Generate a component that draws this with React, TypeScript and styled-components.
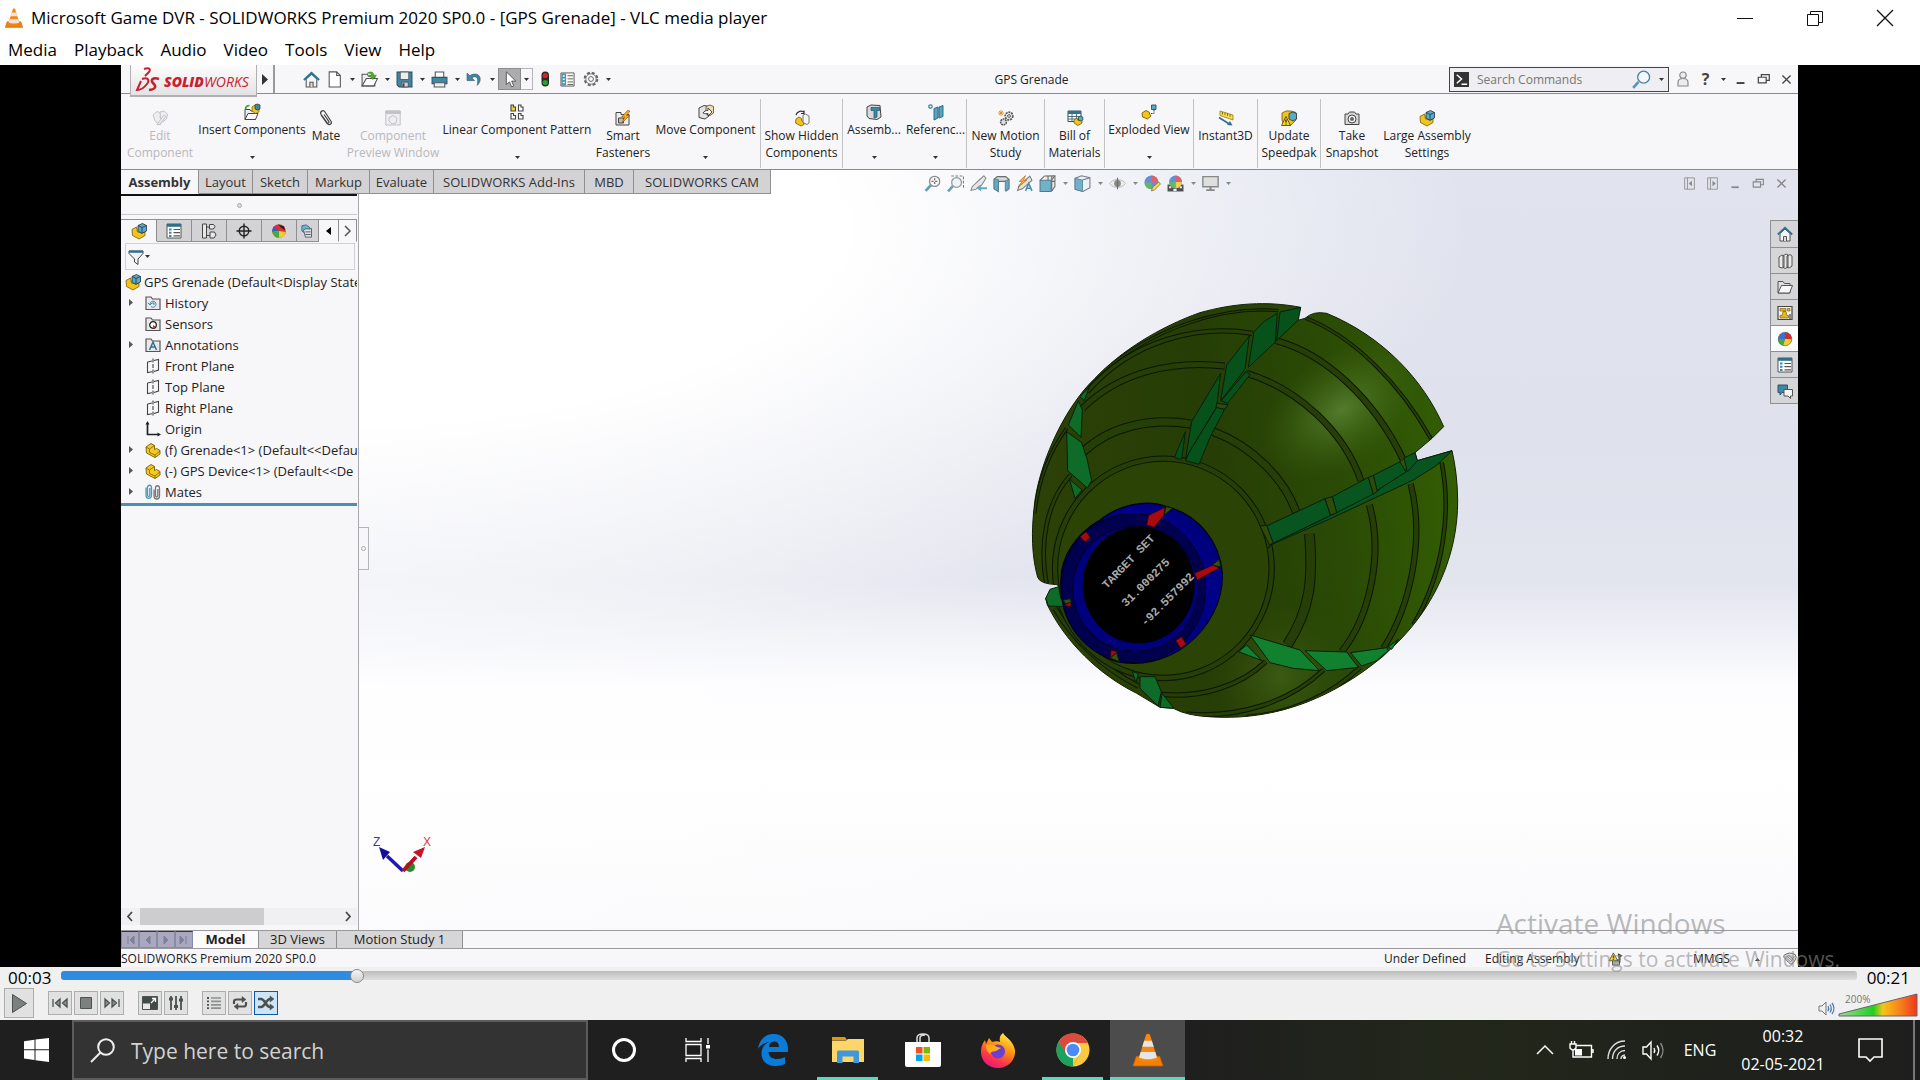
import React from 'react';
import styled, { createGlobalStyle, css } from 'styled-components';

const ui = '"Open Sans", "Noto Sans", "Liberation Sans", sans-serif';

const Global = createGlobalStyle`
  *, *::before, *::after { box-sizing: border-box; }
  body { margin: 0; background: #000; font-family: ${ui}; }
  button, input { font-family: inherit; }
  button { border: 0; padding: 0; margin: 0; background: none; color: inherit; font-size: inherit; }
  svg { display: block; flex: none; overflow: visible; }
`;

/* ------------------------------------------------------------------ icons */

const art: Record<string, React.ReactNode> = {
  cone: (
    <>
      <path d="M2.500 11h11l1.500 4.500H1z" fill="#f57f00" stroke="#c96500" strokeWidth=".4" />
      <path d="M8 .4c.7 0 .9.4 1.100 1L12.600 12.500c-1 1.400-8.200 1.400-9.200 0L6.900 1.400C7.100.8 7.300.4 8 .4z" fill="#f8860d" />
      <path d="M6.200 3.600h3.600l.9 2.900H5.300zM4.600 8.900h6.800l.8 2.600c-2 1.100-6.400 1.100-8.400 0z" fill="#e6e6e6" />
    </>
  ),
  home: (
    <>
      <path d="M3 7.500V15h10V7.500L8 3z" fill="#f4f4f4" stroke="#555" />
      <path d="M.8 8.500 8 1.800l7.200 6.700" fill="none" stroke="#2b7590" strokeWidth="1.900" />
      <path d="M6.500 15v-4.500h3V15" fill="#ddd" stroke="#555" />
    </>
  ),
  page: <path d="M3 .8h7l3.500 3.500V15H3zM10 .8v3.500h3.500" fill="#fff" stroke="#555" />,
  open: (
    <>
      <path d="M1 3h5l1 2h6v9H1z" fill="#eee" stroke="#555" />
      <path d="m1 14 4-7h10.500L12 14z" fill="#fbfbfb" stroke="#555" />
      <path d="M6 2c3-2 6-1 6 2h2.500L11 8 7.500 4H10c0-2-2-2-4-2z" fill="#4fae27" stroke="#2b7a12" strokeWidth=".5" />
    </>
  ),
  save: (
    <>
      <path d="M1 1h14v14H3l-2-2z" fill="#3f87a5" stroke="#2c4d5c" />
      <path d="M4 1h8v7H4z" fill="#e9eef0" stroke="#444" strokeWidth=".7" />
      <path d="M5 10.500h6.500V15H5z" fill="#d4d4d4" stroke="#444" strokeWidth=".7" />
      <path d="M6 11.500h2V15H6z" fill="#444" />
    </>
  ),
  print: (
    <>
      <path d="M4 6V1h8v5" fill="#fff" stroke="#555" />
      <path d="M1 6h14v6H1z" fill="#3f87a5" stroke="#2c5566" />
      <path d="M3 11h10v4H3z" fill="#eee" stroke="#555" />
    </>
  ),
  undo: <path d="M1 2v7h7L5.500 6.500C9 3.800 12.500 6 10.500 13.500 16.500 8 12.500-.5 3.500 4.400z" fill="#3f87a5" stroke="#2c5566" strokeWidth=".6" />,
  cursor: <path d="M5 .8v12l3-2.500 2 4.700 2-1-2-4.500h4z" fill="#fff" stroke="#555" strokeWidth=".9" />,
  traffic: (
    <>
      <rect x="4.500" y=".5" width="7.500" height="15" rx="3.700" fill="#2b2b2b" />
      <circle cx="8.200" cy="4.500" r="2.600" fill="#e02020" />
      <circle cx="8.200" cy="11.500" r="2.600" fill="#2aa02a" />
    </>
  ),
  list: (
    <>
      <path d="M1 1h14v14H1z" fill="#fff" stroke="#555" />
      <path d="M1.500 1.500h5v13h-5z" fill="#4f93ad" />
      <path d="M8 4h6M8 7.300h6M8 10.600h6M8 13.300h6" stroke="#555" />
      <path d="M3 3.500h2v1.500H3zM3 7h2v1.500H3zM3 10.500h2V12H3z" fill="#fff" />
    </>
  ),
  props: (
    <>
      <path d="M1 1h14v14H1z" fill="#fff" stroke="#555" />
      <path d="M1 1h14v2.800H1z" fill="#2f6f88" />
      <path d="M3 5.500h2.500v2H3zM3 8.700h2.500v2H3zM3 11.900h2.500v2H3z" fill="#3f87a5" />
      <path d="M7.500 6.500H14M7.500 9.700H14M7.500 12.900H14" stroke="#555" strokeWidth="1.200" />
    </>
  ),
  gear: (
    <>
      <circle cx="8" cy="8" r="6.300" fill="none" stroke="#666" strokeWidth="2" strokeDasharray="3 1.950" />
      <circle cx="8" cy="8" r="5.200" fill="#f4f4f6" stroke="#666" strokeWidth=".8" />
      <circle cx="8" cy="8" r="2.400" fill="#fff" stroke="#666" />
    </>
  ),
  assembly: (
    <>
      <path d="M1 6.500 5.500 4l1 5 4 1 3.500-1v3.500L8 16l-6.500-3.500z" fill="#f2c41c" stroke="#7a5b05" strokeWidth=".8" />
      <path d="M7 2.500 11.500.5 15.500 2.500V8L11 10.300 7 8z" fill="#5aa9c9" stroke="#20343d" strokeWidth=".8" />
      <path d="M7 2.500 11 4.500l4.500-2M11 4.500v5.800" fill="none" stroke="#20343d" strokeWidth=".8" />
    </>
  ),
  part: (
    <>
      <path d="m1 5 5-3.500L9.500 3.500v4l2-1 3.500 2V12l-5 3.500L1.500 11z" fill="#f5cb22" stroke="#7a5b05" strokeWidth=".9" />
      <path d="m1 5 3.500 2 5-3.500M4.500 7v3.500l5.500 2.500 5-4M10 13v2.500" fill="none" stroke="#7a5b05" strokeWidth=".8" />
    </>
  ),
  ghost: (
    <g fill="#eeedf0" stroke="#c5c4c8">
      <path d="m1 5 4-3.500 4 1.500L8 8l3 2-3 5-5-4z" />
      <path d="m8 2 4-1 3.500 3-1 5-4 3-2-4z" />
      <path d="m6 13 6-8 2 1.500L8 14l-3 1z" />
    </g>
  ),
  insert: (
    <>
      <path d="M1 5.500h5l1 1.500h4.500v8.500H1z" fill="#eee" stroke="#444" />
      <path d="m1 15.500 3-6h10l-2.500 6z" fill="#fafafa" stroke="#444" />
      <path d="M1.500 5.500c0-3 2-4 4-4" fill="none" stroke="#3da321" strokeWidth="1.700" />
      <path d="M8 3 11 1l1 4 3-.5V8l-3.500 1.500L8 7z" fill="#f2c41c" stroke="#7a5b05" strokeWidth=".7" />
      <path d="m11 .8 2.500-.8L16 1v4l-2.500 1L11 5z" fill="#3f87a5" stroke="#20343d" strokeWidth=".7" />
    </>
  ),
  clip: (
    <path d="m3 5 6 8.500c2 2.500 5.500.3 4-2.300L7 2C5.200-.6 1.500 1.500 3 4.300l6 8.200c1 1.300 2.600.2 1.800-1.200L6 4.500" fill="none" stroke="#444" strokeWidth="1.200" />
  ),
  preview: (
    <g fill="#efeef1" stroke="#c3c2c6">
      <path d="M.8 1h14.400v14H.8z" />
      <path d="M.8 1h14.400v2.500H.8z" fill="#c3c2c6" />
      <path d="M4 8 8 5.500 12 8l-1 5-4 1-3-3z" />
    </g>
  ),
  pattern: (
    <g fill="#fff" stroke="#444" strokeWidth="1.100">
      <path d="M2 1h2.500v2H6.500v4H2z" fill="#f2d33c" />
      <path d="M9.500 1H12v2h2v4H9.500zM2 9.500h2.500v2H6.500V15H2zM9.500 9.500H12v2h2V15H9.500z" />
    </g>
  ),
  smart: (
    <>
      <path d="M1 2.500h5V4.500h8V15H1z" fill="#eee" stroke="#444" />
      <path d="M3.500 8h5v5h-5z" fill="#bbb" stroke="#444" />
      <path d="M12.500.5 6.500 7h3L7 13l7.500-7.500h-3L15 1z" fill="#f7a81b" stroke="#8a4b00" strokeWidth=".6" />
    </>
  ),
  move: (
    <>
      <path d="m1 4 5-2.500 5 1V12l-4 3-6-1.500z" fill="#e4e4e4" stroke="#444" />
      <path d="m8 2.500 4-1.500 3.500 1.500V9L12 11.500 8 10z" fill="#f2dfa0" stroke="#444" strokeWidth=".8" />
      <path d="M5 9c1-2 3-2.500 5-2.500V4l4 4-4 4V9.500C8 9.500 7 10 5 9z" fill="#fff" stroke="#222" strokeWidth=".8" />
    </>
  ),
  hidden: (
    <>
      <path d="M2 5C3 1 8 0 10 2.500M10 .5v3H7" fill="none" stroke="#333" strokeWidth="1.200" />
      <path d="m2 9 3-2 2.500 1.500v2L10 12v2.500L7 16l-5.500-3z" fill="#f2c41c" stroke="#7a5b05" strokeWidth=".8" />
      <path d="m9 5 2.500-1L15 6v7l-2 1.500-4-2z" fill="#f6f6f6" stroke="#555" strokeWidth=".8" />
    </>
  ),
  feature: (
    <>
      <path d="m1 3 4-2 9 .5L15 13l-4 2.500-8-1L1 12z" fill="#d7dadc" stroke="#444" />
      <path d="M5 3.500h8.500v3H11V13l-3 1V6.500H5z" fill="#3f87a5" stroke="#20505f" strokeWidth=".7" />
    </>
  ),
  reference: (
    <>
      <circle cx="2.500" cy="2.500" r="1.700" fill="#fff" stroke="#2f7f9e" strokeWidth="1.200" />
      <path d="m6 4.500 4-1.500v11l-4 2zM11 3l4-1.500v11L11 14z" fill="#5aa6c2" stroke="#22617a" strokeWidth=".9" />
    </>
  ),
  motion: (
    <>
      <circle cx="11" cy="6" r="3.800" fill="#eee" stroke="#555" strokeWidth="1.700" strokeDasharray="2 .8" />
      <circle cx="11" cy="6" r="1.400" fill="#fff" stroke="#555" />
      <circle cx="5.500" cy="12" r="2.900" fill="#ddd" stroke="#555" strokeWidth="1.500" strokeDasharray="1.800 .7" />
      <path d="M3 0v6M0 3h6M1 1l4 4M5 1 1 5" stroke="#e08a1a" strokeWidth=".9" />
    </>
  ),
  bom: (
    <>
      <path d="M1 1h13v10.500H1z" fill="#fff" stroke="#2e5361" />
      <path d="M1 1h13v3H1z" fill="#2f7390" />
      <path d="M1 6.500h13M1 9h13M5 4v7.500M9.500 4v7.500" stroke="#2e5361" strokeWidth=".8" />
      <path d="m7 10 3-2 1 2.500 4-1V13l-4 2.500L7 13z" fill="#f2c41c" stroke="#7a5b05" strokeWidth=".8" />
      <path d="m11.500 7 2-1 2.300 1v3l-2 1-2.300-1z" fill="#5aa9c9" stroke="#20343d" strokeWidth=".7" />
    </>
  ),
  exploded: (
    <>
      <path d="m1 9 4-2.500L8 8l1 2.500 1 1.500-3.500 3L1.500 13z" fill="#f2c41c" stroke="#7a5b05" strokeWidth=".9" />
      <path d="M10.500 1h4.500v4.500h-4.500z" fill="#5aa9c9" stroke="#20505f" strokeWidth=".9" />
      <path d="M13 6v3.500H8.500" fill="none" stroke="#333" strokeDasharray="1.500 1" />
    </>
  ),
  instant: (
    <>
      <path d="m2 1 13 4v5L2 5.500z" fill="#f7dc4c" stroke="#8a7010" strokeWidth=".7" />
      <path d="M4.500 2v2.500M7 2.700v2.500M9.500 3.400v2.500M12 4.200v2.500" stroke="#705800" strokeWidth=".8" />
      <path d="m1 7.500 9.500 6" stroke="#2f7390" strokeWidth="1.700" />
      <path d="m14.500 15.500-5.500-.5 3-4z" fill="#2f7390" />
    </>
  ),
  update: (
    <>
      <path d="m1 3 4-2h5l5 1.500V10l-5 5H3L1 10z" fill="#f2c41c" stroke="#6b5406" strokeWidth=".8" />
      <path d="M8 3.500 12 2l3.500 1.500V9L12 11 8 9z" fill="#5aa9c9" stroke="#20343d" strokeWidth=".8" />
      <path d="m5 6.500 4.500 9h-9z" fill="#ffd91a" stroke="#333" strokeWidth=".8" />
      <path d="M5 9.500v3M5 13.500v1" stroke="#111" strokeWidth="1.200" />
    </>
  ),
  camera: (
    <>
      <path d="M1 4h3l1.500-2h5L12 4h3v10.500H1z" fill="#d8d8d8" stroke="#444" />
      <circle cx="8" cy="9" r="4" fill="#f5f5f5" stroke="#444" />
      <circle cx="8" cy="9" r="2" fill="#666" />
    </>
  ),
  tree: (
    <g fill="#e8e8e8" stroke="#444">
      <path d="M1.500 1h4v14h-4zM5.500 4H9M5.500 12.500H9" />
      <path d="M8.500 1.500h4l1.500 2-1.500 2.500h-4zM9 9h4.500l1.500 3-2 3H9z" />
    </g>
  ),
  target: (
    <g fill="none" stroke="#222" strokeWidth="1.400">
      <circle cx="8" cy="8" r="4.800" />
      <path d="M8 .5v15M.5 8h15" />
    </g>
  ),
  ball: (
    <>
      <circle cx="8" cy="8" r="6.800" fill="#3b6fd6" />
      <path d="M8 8V1.200A6.800 6.800 0 0 1 14.800 8z" fill="#d42a2a" />
      <path d="M8 8h6.800A6.800 6.800 0 0 1 6 14.500z" fill="#f0cf2c" />
      <path d="M8 8 6 14.500A6.800 6.800 0 0 1 1.200 8z" fill="#43ab3b" />
      <circle cx="8" cy="8" r="6.800" fill="none" stroke="#555" strokeWidth=".5" />
    </>
  ),
  display: (
    <>
      <circle cx="8" cy="8" r="6.800" fill="#e03030" />
      <path d="M8 8 3 3.300A6.800 6.800 0 0 0 1.300 9z" fill="#2f62c8" />
      <path d="M1.300 9A6.800 6.800 0 0 0 14.700 9L8 8z" fill="#f0cf2c" />
      <path d="M8 8 1.300 9A6.800 6.800 0 0 0 8 14.800z" fill="#43ab3b" />
      <path d="m7 1.500 6 2 1 4-4-3z" fill="#222" />
    </>
  ),
  cam: (
    <>
      <path d="m1 2 5-1 4 3v6l-5 1-4-3z" fill="#6fb3cc" stroke="#22617a" strokeWidth=".9" />
      <path d="M3 7c3-3 6 0 9-2v10H5z" fill="#dfe4e6" stroke="#445" strokeWidth=".9" />
      <path d="M5 9h6M5 12h6" stroke="#445" />
    </>
  ),
  filter: (
    <>
      <path d="M1 2h14v2.500L10 10v5.500L6.500 13v-3L1 4.500z" fill="#f1f1f1" stroke="#444" />
      <path d="M1 1.500h14v2.300H1z" fill="#2f7390" />
    </>
  ),
  folder: <path d="M1 14.500V2h5l1.500 2H15v10.500z" fill="#e9e9ea" stroke="#555" strokeWidth="1.200" />,
  plane: (
    <g fill="none" stroke="#444" strokeWidth="1.100">
      <path d="m2.500 4 4.500-1M9 2.500 13.500 1.500V12l-4.500 1.500M2.500 4v10.500L7 13.800" />
      <path d="M8 .5V16" strokeDasharray="4 1.500" />
    </g>
  ),
  origin: (
    <>
      <path d="M2.500 2v11.500H14" fill="none" stroke="#222" strokeWidth="1.700" />
      <path d="m2.500 0 2 3.500h-4zM16 13.500 12.500 11.500v4z" fill="#222" />
    </>
  ),
  mates: (
    <g fill="none" strokeWidth="1.300">
      <path d="M1 3.500v7.500c0 4.500 5.500 4.500 5.500 0V3.500C6.500.5 2.500.5 2.500 3.500V11c0 2 2.300 2 2.300 0V4" stroke="#4d98b5" />
      <path d="M9 5.500V12c0 4 5.500 4 5.500 0V4c0-3-4-3-4 0v7.500c0 2 2.300 2 2.300 0V5" stroke="#777" />
    </g>
  ),
  books: (
    <g fill="#eaeaea" stroke="#444" strokeWidth=".9">
      <path d="m2 4 3-2 2 1v11l-2 1-3-1zM6 3l3-2 2 1v12l-3 1.500L6 14zM10 3l3-1.500L15 3v10l-3 2-2-1z" />
    </g>
  ),
  folderOpen: (
    <>
      <path d="M1 2.500h5l1.500 2H13V14H1z" fill="#ddd" stroke="#555" />
      <path d="m1 14 3.500-7.500H15.500L12.500 14z" fill="#f8f8f8" stroke="#555" />
    </>
  ),
  palette: (
    <>
      <path d="M1 1.500h14v13H1z" fill="#f4f4f4" stroke="#444" strokeWidth="1.200" />
      <path d="M3 3.500h6V6H3zM10.500 3.500H13V6h-2.500zM6 6.500h3l1 4h1.500V13H3v-2.500h2z" fill="#e5b818" stroke="#6b5406" strokeWidth=".6" />
      <path d="M12 9h2.500v5H12z" fill="#888" />
    </>
  ),
  chat: (
    <>
      <path d="M1 2h9.500v7.500H5L3 12V9.500H1z" fill="#3f87a5" stroke="#2c5566" />
      <path d="M7 6.500h8.500v6.500h-2v2.500L11 13H7z" fill="#f6f6f6" stroke="#555" />
    </>
  ),
  lens: (
    <>
      <path d="m1.500 15 5-5.500" stroke="#4b8fb0" strokeWidth="2.600" />
      <circle cx="10" cy="6" r="4.800" fill="#fafafa" stroke="#777" strokeWidth="1.200" />
      <path d="M10 3v6M7 6h6" stroke="#555" strokeWidth="1.200" strokeDasharray="2 1.500" />
    </>
  ),
  lensArea: (
    <>
      <path d="M4 1h11.500v11" fill="none" stroke="#666" strokeDasharray="2.500 1.500" />
      <path d="m1 15.500 4.500-5" stroke="#4b8fb0" strokeWidth="2.400" />
      <circle cx="9" cy="7" r="4.600" fill="#eef4f7" stroke="#888" strokeWidth="1.200" />
    </>
  ),
  previous: (
    <>
      <path d="M13 .8 9.500 4 2 11l-1 3.500 4.500-1L8 11l3-1.500L15 3z" fill="#e6e6e6" stroke="#777" />
      <path d="M16 11.500H10.500V9l-4 3.500 4 3V13.500H16z" fill="#4b9cbb" />
    </>
  ),
  section: (
    <>
      <path d="m1 4 3-2.500h8L15 4v9l-2.500 2V6H5v9.500L1 13z" fill="#cfd5d8" stroke="#555" />
      <path d="M1 4h4v11.500L1 13zM11.500 5.500 15 4v9l-3.500 2z" fill="#4b9cbb" stroke="#33657a" strokeWidth=".7" />
    </>
  ),
  dynamic: (
    <>
      <path d="M13 1 3 10l-1.500 4.500L6 13l9-8z" fill="#e0e0e0" stroke="#666" />
      <path d="M9 .5 3 6h3L2 11.500 10 5H7z" fill="#f6a623" stroke="#a34d00" strokeWidth=".6" />
      <path d="m9 15 3-7 3 7M10 12.500h4.200" fill="none" stroke="#2f7fa3" strokeWidth="1.500" />
    </>
  ),
  orient: (
    <>
      <path d="m5 1 10-.3V11l-3 4" fill="#e6e6e6" stroke="#555" />
      <path d="M8.500 1v4M12 1v14M5 1 1 5M15 .7 11.500 5M15 6h-4" stroke="#555" fill="none" />
      <path d="M1 5h10.500v10.500H1z" fill="#5aa6c2" stroke="#33657a" />
    </>
  ),
  style: (
    <>
      <path d="m1 3 6-2.300L15 2.500V12l-6.500 3.500L1 13.500z" fill="#e9f0f3" stroke="#667" />
      <path d="M1 3l7 1.800v10.700l-7-2z" fill="#5aa6c2" stroke="#33657a" strokeWidth=".7" />
      <path d="M8 4.800 15 2.500" stroke="#667" />
    </>
  ),
  eye: (
    <>
      <path d="M.5 8C4 3 12 3 15.500 8 12 13 4 13 .5 8z" fill="#eee" stroke="#aaa" strokeWidth=".8" />
      <circle cx="8" cy="8" r="3.200" fill="#777" />
      <path d="M8 2.500v11" stroke="#555" />
    </>
  ),
  ballPen: (
    <>
      <circle cx="7" cy="7" r="6.500" fill="#4f7fd6" />
      <path d="M7 7V.5A6.500 6.500 0 0 1 13.500 7z" fill="#e0484c" />
      <path d="M7 7v6.500A6.500 6.500 0 0 1 .5 7z" fill="#4cae50" />
      <path d="m7 15 1-3.500 6-5 1.500 2L10 14z" fill="#efd04a" stroke="#7a5b05" strokeWidth=".7" />
    </>
  ),
  scene: (
    <>
      <path d="M.5 9h15v6.500H.5z" fill="#333" />
      <path d="M2 10.500h2v2H2zM6 13h3v2H6zM12 10.500h2v2h-2z" fill="#eee" />
      <circle cx="8" cy="6.500" r="6" fill="#4f7fd6" />
      <path d="M8 6.500V.5a6 6 0 0 1 6 6z" fill="#e0484c" />
      <path d="M8 6.500h6a6 6 0 0 1-6 6z" fill="#efc93a" />
      <path d="M8 6.500v6a6 6 0 0 1-6-6z" fill="#4cae50" />
    </>
  ),
  monitor: (
    <>
      <path d="M.8 1.500h14.400v9.500H.8z" fill="#dcdcdc" stroke="#777" strokeWidth="1.300" />
      <path d="M7 11h2v2.500h3V15H4v-1.500h3z" fill="#777" />
    </>
  ),
  paneL: (
    <>
      <path d="M2 1h12v14H2z" fill="none" stroke="#888" />
      <path d="M5.500 1v14" stroke="#888" />
      <path d="M11 4.500v7L7 8z" fill="#888" />
    </>
  ),
  paneR: (
    <>
      <path d="M2 1h12v14H2z" fill="none" stroke="#888" />
      <path d="M5.500 1v14" stroke="#888" />
      <path d="M8 4.500v7L12 8z" fill="#888" />
    </>
  ),
  min: <path d="M3 11.500h9v2.200H3z" fill="currentColor" />,
  restore: <path d="M1.500 6h9v6.500h-9zM5 6V3h9v6.500h-3.500" fill="none" stroke="currentColor" strokeWidth="1.400" />,
  close: <path d="m3 3 10 10M13 3 3 13" stroke="currentColor" strokeWidth="1.600" />,
  user: (
    <g fill="#ececec" stroke="#8a8a8a" strokeWidth="1.200">
      <path d="M3 15v-3.500Q3 7.500 8 7.500t5 4V15z" />
      <circle cx="8" cy="4.200" r="3.200" />
    </g>
  ),
  prompt: (
    <>
      <path d="M0 0h16v16H0z" fill="#333" />
      <path d="m3 3 5 4.500-5 4.500M8 13h6" fill="none" stroke="#fff" strokeWidth="1.600" />
    </>
  ),
  glass: (
    <>
      <path d="m1 15 4.500-5" stroke="#5b93b5" strokeWidth="2.200" />
      <circle cx="9.800" cy="6" r="5" fill="#f4f8fb" stroke="#4b83a5" strokeWidth="1.100" />
    </>
  ),
  warn: (
    <>
      <path d="M4 9h8v6H4z" fill="#aab4b8" stroke="#555" />
      <path d="M10 1.500 15.500 4 13 6v6h-2V7z" fill="#333" />
      <path d="m5 1 5 9H0z" fill="#ffd21a" stroke="#333" strokeWidth=".8" />
      <path d="M5 4v3M5 8v1" stroke="#222" strokeWidth="1.300" />
    </>
  ),
  tag: (
    <>
      <path d="M1 4q6-5 13-1 2 3 0 6-3 5-5 5-2-1-8-8z" fill="#e2e2e2" stroke="#555" />
      <path d="m4 4.500 6 5M6 3.500l6 5M3 6l6 5.500M13 5l-4 6" stroke="#777" fill="none" />
    </>
  ),
};

const Icon = ({ n, s = 16 }: { n: string; s?: number }) => (
  <svg width={s} height={s} viewBox="0 0 16 16" aria-hidden="true">{art[n]}</svg>
);

const Down = ({ c = '#333' }: { c?: string }) => (
  <svg width="5" height="3" viewBox="0 0 5 3" aria-hidden="true"><path d="M0 0h5L2.500 3z" fill={c} /></svg>
);

/* ------------------------------------------------------------- VLC chrome */

const Page = styled.div`
  display: flex;
  flex-direction: column;
  min-height: 100vh;
`;
const TitleBar = styled.header`
  display: flex;
  align-items: center;
  height: 34px;
  padding: 2px 0 0 4px;
  gap: 7px;
  background: #fff;
  color: #000;
  h1 { margin: 0; font-size: 17px; font-weight: 400; line-height: 24px; white-space: nowrap; }
`;
const WindowButtons = styled.div`
  display: flex;
  margin-left: auto;
`;
const WindowButton = styled.button`
  width: 70px;
  height: 32px;
  display: grid;
  place-items: center;
`;
const MenuBar = styled.nav`
  display: flex;
  align-items: center;
  gap: 17px;
  height: 31px;
  padding: 0 8px;
  background: #fff;
  font-size: 17px;
`;
const Video = styled.main`
  flex: 1;
  display: flex;
  padding: 0 122px 0 121px;
  background: #000;
`;

/* --------------------------------------------------------- CAD application */

const Cad = styled.section`
  flex: 1;
  min-width: 0;
  display: flex;
  flex-direction: column;
  background: #f7f6f9;
  color: #222;
  font-size: 12px;
`;
const QuickBar = styled.div`
  display: flex;
  align-items: center;
  height: 29px;
  border-bottom: 1px solid #8a8a8c;
`;
const Logo = styled.div`
  align-self: flex-start;
  display: flex;
  align-items: center;
  gap: 4px;
  width: 127px;
  height: 32px;
  margin-left: 9px;
  padding: 0 4px 2px 5px;
  border: solid #b0b0b2;
  border-width: 0 1px 2px;
  background: linear-gradient(#fdfdfd, #e3e3e5);
  z-index: 1;
  color: #c8202f;
  font-size: 14px;
  font-style: italic;
  span { padding-top: 5px; line-height: 20px; }
  b { font-weight: 800; }
`;
const Expand = styled.button`
  width: 18px;
  height: 28px;
  display: grid;
  place-items: center;
  border-right: 2px solid #9a9a9c;
  margin-right: 25px;
`;
const Tool = styled.button<{ $on?: boolean }>`
  width: 23px;
  height: 22px;
  display: grid;
  place-items: center;
  ${p => p.$on && css`background: #acabad; border: 1px solid #8c8c8e;`}
`;
const Drop = styled.button<{ $framed?: boolean }>`
  width: 12px;
  height: 22px;
  display: grid;
  place-items: center;
  ${p => p.$framed && css`border: 1px solid #b5b5b7; border-left: 0;`}
`;
const DocTitle = styled.div`
  flex: 1;
  text-align: center;
`;
const CommandSearch = styled.form`
  display: flex;
  align-items: center;
  width: 220px;
  height: 25px;
  padding: 0 4px;
  gap: 8px;
  border: 1px solid #444;
  background: #eeeef3;
  input { flex: 1; min-width: 0; border: 0; padding: 0; outline: 0; background: none; font-size: 12px; }
  input::placeholder { color: #777; opacity: 1; }
`;
const QuickEnd = styled.div`
  display: flex;
  align-items: center;
  padding: 0 0 0 2px;
  color: #444;
  b { font-size: 16px; }
`;

const Ribbon = styled.div`
  display: flex;
  height: 76px;
  padding: 5px 0 1px;
  border-bottom: 1px solid #8a8a8c;
`;
const Command = styled.button<{ $w: number; $drop?: boolean; $sep?: boolean; $off?: boolean }>`
  width: ${p => p.$w}px;
  flex: none;
  display: flex;
  flex-direction: column;
  align-items: center;
  padding-top: ${p => (p.$drop ? 5 : 11)}px;
  line-height: 17px;
  white-space: nowrap;
  color: ${p => (p.$off ? '#b9b8bc' : '#222')};
  border-right: ${p => (p.$sep ? '1px solid #c2c1c4' : '0')};
  svg + span { margin-top: 1px; }
  span + svg { margin-top: 18px; }
`;

const Body = styled.div`
  flex: 1;
  display: flex;
  flex-direction: column;
  background:
    radial-gradient(ellipse 1150px 430px at 12% 8%, #fff 45%, rgba(255, 255, 255, 0) 100%),
    linear-gradient(90deg, rgba(255, 255, 255, 0.6), rgba(255, 255, 255, 0) 60%),
    linear-gradient(180deg, #e1e4ef 0, #dfe1ec 35%, #e2e4ee 54%, #fdfdff 68%, #fff 80%, #f9f9fc 100%);
`;
const TabRow = styled.div`
  display: flex;
  height: 24px;
`;
const RibbonTab = styled.button<{ $w: number; $on?: boolean }>`
  width: ${p => p.$w}px;
  flex: none;
  font-size: 13px;
  line-height: 22px;
  border-right: 1px solid #8f8e91;
  border-bottom: 1px solid #8f8e91;
  background: #d3d2d5;
  color: #333;
  white-space: nowrap;
  ${p => p.$on && css`background: #f7f6f9; font-weight: 700; border-bottom-color: #f7f6f9;`}
`;
const ViewTools = styled.div`
  display: flex;
  align-items: center;
  padding-top: 3px;
  margin-left: 150px;
  opacity: 0.85;
`;
const DocButtons = styled.div`
  display: flex;
  align-items: center;
  margin-left: auto;
  padding: 3px 5px 0 0;
  color: #888;
`;
const Work = styled.div`
  flex: 1;
  display: flex;
`;
const Panel = styled.aside`
  width: 238px;
  flex: none;
  display: flex;
  flex-direction: column;
  padding-right: 1px;
  background: #f7f6f9;
  border-right: 1px solid #a9a9ad;
`;
const Grip = styled.div`
  display: grid;
  place-items: center;
  height: 21px;
  border-top: 2px solid #111;
  border-bottom: 1px solid #c9c9cb;
  i { width: 5px; height: 5px; border-radius: 50%; border: 1px solid #aaa; background: #ddd; }
`;
const PanelTabs = styled.div`
  display: flex;
  height: 23px;
  margin-top: 4px;
  border-top: 1px solid #8f8e91;
`;
const PanelTab = styled.button<{ $on?: boolean; $w?: number }>`
  width: ${p => p.$w ?? 35}px;
  flex: none;
  display: grid;
  place-items: center;
  overflow: hidden;
  border-right: 1px solid #8f8e91;
  border-bottom: 1px solid #8f8e91;
  background: #d3d2d5;
  ${p => p.$on && css`background: #f7f6f9; border-bottom-color: #f7f6f9;`}
`;
const Filter = styled.label`
  display: flex;
  align-items: center;
  gap: 1px;
  height: 27px;
  margin: 1px 2px 0 4px;
  padding: 0 2px;
  border: 1px solid #d0d0d4;
  input { flex: 1; min-width: 0; border: 0; background: none; outline: 0; }
`;
const Tree = styled.ul`
  list-style: none;
  margin: 0;
  padding: 1px 0 1px;
  border-bottom: 3px solid #4a8fb5;
  font-size: 13px;
`;
const Row = styled.li<{ $root?: boolean }>`
  display: flex;
  align-items: center;
  gap: ${p => (p.$root ? 3 : 4)}px;
  height: 21px;
  padding-left: ${p => (p.$root ? 4 : 8)}px;
  overflow: hidden;
  white-space: nowrap;
  line-height: 20px;
`;
const Twist = styled.span`
  width: 12px;
  flex: none;
`;
const FolderMark = styled.span`
  display: grid;
  flex: none;
  > * { grid-area: 1 / 1; place-self: center; }
  > :last-child { margin-top: 3px; }
`;
const HScroll = styled.div`
  display: flex;
  align-items: center;
  justify-content: space-between;
  height: 17px;
  margin-top: auto;
  margin-bottom: 5px;
  padding: 0 6px;
  background: #f0eff1;
`;
const Thumb = styled.div`
  width: 124px;
  height: 17px;
  margin: 0 auto 0 7px;
  background: #cdcccf;
`;
const Canvas = styled.div`
  flex: 1;
  position: relative;
  display: flex;
  justify-content: space-between;
`;
const Splitter = styled.button`
  align-self: flex-start;
  width: 10px;
  height: 43px;
  margin-top: 333px;
  display: grid;
  place-items: center;
  border: 1px solid #b5b5b9;
  border-left: 0;
  background: #f7f6f9;
  i { width: 5px; height: 5px; border-radius: 50%; border: 1px solid #aaa; }
`;
const Model = styled.svg`
  position: absolute;
  left: 641px;
  top: 86px;
`;
const Triad = styled.svg`
  position: absolute;
  left: 12px;
  bottom: 52px;
`;
const TaskPane = styled.div`
  align-self: flex-start;
  margin-top: 26px;
  border: 1px solid #8f8e91;
  border-right: 0;
`;
const PaneButton = styled.button<{ $on?: boolean }>`
  display: grid;
  place-items: center;
  width: 27px;
  height: 26px;
  background: ${p => (p.$on ? '#fdfdfe' : '#d6d5d8')};
  & + & { border-top: 1px solid #8f8e91; }
`;
const SheetTabs = styled.div`
  display: flex;
  height: 19px;
  border-top: 1px solid #9a9a9c;
  border-bottom: 1px solid #9a9a9c;
`;
const SheetNav = styled.button`
  width: 18px;
  display: grid;
  place-items: center;
  background: #a9a8be;
  border: 1px solid #8b8aa6;
  border-top-color: #333;
`;
const SheetTab = styled.button<{ $w: number; $on?: boolean }>`
  width: ${p => p.$w}px;
  padding-bottom: 1px;
  font-size: 13px;
  line-height: 14px;
  border-right: 1px solid #8f8e91;
  background: ${p => (p.$on ? '#fbfafc' : '#d6d5d8')};
  font-weight: ${p => (p.$on ? 700 : 400)};
`;
const Status = styled.footer`
  display: flex;
  align-items: center;
  height: 18px;
  padding: 2px 1px 0 0;
  line-height: 16px;
  > span:first-child { flex: 1; }
`;
const StatusCell = styled.span<{ $w: number }>`
  display: flex;
  align-items: center;
  width: ${p => p.$w}px;
`;

/* ------------------------------------------------------------ VLC controls */

const Controls = styled.section`
  height: 53px;
  padding: 0 2px 0 4px;
  background: #f0f0f0;
  color: #000;
`;
const Seek = styled.div`
  display: flex;
  align-items: center;
  height: 19px;
  gap: 10px;
  padding: 0 8px 0 4px;
  font-size: 17px;
  line-height: 19px;
  span { padding-top: 1px; }
`;
const SeekBar = styled.input`
  flex: 1;
  appearance: none;
  height: 9px;
  margin: 0 0 2px;
  border-radius: 3px;
  background: linear-gradient(90deg, #2e8be0 var(--pos), transparent var(--pos)), linear-gradient(#bdbdbd, #dedede);
  &::-webkit-slider-thumb {
    appearance: none;
    width: 14px;
    height: 14px;
    border-radius: 50%;
    border: 1px solid #8a8a8a;
    background: linear-gradient(#f4f4f4, #d0d0d0);
  }
`;
const Buttons = styled.div`
  display: flex;
  align-items: center;
  gap: 2px;
  height: 34px;
`;
const Push = styled.button<{ $big?: boolean; $gap?: boolean; $on?: boolean }>`
  display: grid;
  place-items: center;
  width: ${p => (p.$big ? 30 : 24)}px;
  height: ${p => (p.$big ? 30 : 24)}px;
  margin-left: ${p => (p.$gap ? 12 : 0)}px;
  border: 1px solid ${p => (p.$on ? '#0a5aa5' : '#adadad')};
  background: ${p => (p.$on ? '#cce4f7' : '#e1e1e1')};
`;
const Volume = styled.label`
  display: flex;
  align-items: flex-end;
  gap: 3px;
  margin-left: auto;
  padding-top: 4px;
  position: relative;
  input { position: absolute; right: 0; bottom: 0; width: 80px; height: 24px; margin: 0; opacity: 0; }
  span { position: absolute; left: 27px; top: 3px; font-size: 10px; line-height: 14px; color: #777; }
`;

/* ---------------------------------------------------------------- taskbar */

const Taskbar = styled.footer`
  display: flex;
  align-items: stretch;
  height: 60px;
  background: linear-gradient(90deg, #1f1f1f 62%, #22271a 76%, #1f211c 90%, #1e1e1e);
  color: #fff;
`;
const Start = styled.button`
  width: 72px;
  display: grid;
  place-items: center;
`;
const TaskSearch = styled.label`
  display: flex;
  align-items: center;
  gap: 16px;
  width: 516px;
  padding: 0 16px;
  border: 2px solid #5c5c5c;
  background: #333;
  input { flex: 1; min-width: 0; border: 0; padding: 2px 0 0; outline: 0; background: none; font-size: 21px; color: #fff; }
  input::placeholder { color: #d2d2d2; opacity: 1; }
`;
const TaskApp = styled.button<{ $open?: boolean; $active?: boolean }>`
  width: 75px;
  display: grid;
  place-items: center;
  position: relative;
  background: ${p => (p.$active ? '#4c4c4c' : 'none')};
  ${p => (p.$open || p.$active) && css`
    &::after {
      content: '';
      position: absolute;
      bottom: 0;
      left: ${p.$active ? 0 : 7}px;
      right: ${p.$active ? 0 : 7}px;
      height: 3px;
      background: #62d6b8;
    }
  `}
`;
const Tray = styled.div`
  display: flex;
  align-items: center;
  margin-left: auto;
  font-size: 16px;
`;
const TrayItem = styled.button<{ $w?: number }>`
  width: ${p => p.$w ?? 36}px;
  height: 60px;
  display: grid;
  place-items: center;
`;
const Clock = styled.time`
  width: 108px;
  text-align: center;
  line-height: 28px;
`;
const ShowDesktop = styled.button`
  width: 7px;
  height: 60px;
  margin-left: 10px;
  border-left: 2px solid #777;
`;
const Watermark = styled.div`
  position: absolute;
  right: 80px;
  bottom: 106px;
  pointer-events: none;
  color: rgba(140, 140, 140, 0.6);
  p { margin: 0; font-size: 28px; line-height: 42px; }
  p + p { font-size: 21px; line-height: 30px; }
`;

/* ------------------------------------------------------------ model drawing */

const Groove = ({ d, w = 15 }: { d: string; w?: number }) => (
  <g fill="none">
    <path d={d} stroke="#0d1502" strokeWidth={w + 6} />
    <path d={d} stroke="#263f06" strokeWidth={w} />
  </g>
);
const Facets = ({ fill, list }: { fill: string; list: string[] }) => (
  <g fill={fill} stroke="#06200b" strokeWidth="3" strokeLinejoin="round">
    {list.map(p => <polygon key={p} points={p} />)}
  </g>
);
const silhouette =
  'M902 82C800 62 700 70 600 98C480 140 360 215 285 295C200 375 125 530 105 660C92 760 96 830 113 892Q120 912 172 914L180 925L137 955Q140 975 150 990C200 1085 290 1180 410 1240L480 1282L520 1285Q560 1308 640 1311C840 1322 1010 1245 1150 1128L1195 1085C1300 980 1374 830 1373 660Q1372 580 1356 512L1252 542L1245 518L1296 475L1331 440C1270 300 1150 170 980 100Q940 92 915 115L890 122Z';

const Grenade = () => (
  <Model width="480" height="460" viewBox="0 0 1440 1380" role="img" aria-label="GPS Grenade model">
    <defs>
      <linearGradient id="olive" x1="0" y1="0.400" x2="1" y2="0.300">
        <stop offset="0" stopColor="#2c4107" />
        <stop offset="0.400" stopColor="#263d06" />
        <stop offset="0.700" stopColor="#2a4a05" />
        <stop offset="1" stopColor="#345f04" />
      </linearGradient>
      <radialGradient id="shine" gradientUnits="userSpaceOnUse" cx="0" cy="0" r="1" gradientTransform="translate(1025 390) rotate(-35) scale(270 170)">
        <stop offset="0" stopColor="#5b8434" stopOpacity="0.850" />
        <stop offset="1" stopColor="#3d6410" stopOpacity="0" />
      </radialGradient>
      <radialGradient id="glow" gradientUnits="userSpaceOnUse" cx="840" cy="1190" r="220">
        <stop offset="0" stopColor="#4a6a1c" stopOpacity="0.600" />
        <stop offset="1" stopColor="#35520a" stopOpacity="0" />
      </radialGradient>
      <linearGradient id="casing" x1="0" y1="1" x2="1" y2="0">
        <stop offset="0" stopColor="#00006e" />
        <stop offset="0.700" stopColor="#00008a" />
        <stop offset="1" stopColor="#00006a" />
      </linearGradient>
      <clipPath id="hull"><path d={silhouette} /></clipPath>
    </defs>
    <path d={silhouette} fill="url(#olive)" stroke="#142005" strokeWidth="3" />
    <g clipPath="url(#hull)">
      <path d={silhouette} fill="url(#shine)" />
      <path d={silhouette} fill="url(#glow)" />
      <Groove d="M917 114C1060 170 1200 310 1293 476" w={6} />
      <Groove d="M828 182C970 220 1120 350 1210 540" />
      <Groove d="M740 280C890 325 1030 450 1083 602" />
      <Groove d="M640 455C760 500 855 600 888 695" w={20} />
      <Groove d="M835 92C680 78 460 135 285 295" w={4} />
      <Groove d="M757 160C600 135 400 175 262 335" w={10} />
      <Groove d="M674 258C520 240 360 275 248 385" />
      <Groove d="M572 432C450 412 330 440 250 515" w={22} />
      <Groove d="M200 445C145 520 115 600 104 700" w={5} />
      <Groove d="M212 585C135 670 118 800 140 915" w={8} />
      <Groove d="M928 762C940 900 930 990 862 1095" w={26} />
      <Groove d="M1108 675C1150 820 1110 1010 1025 1115" />
      <Groove d="M1232 612C1275 780 1230 980 1150 1105" w={13} />
      <Groove d="M1325 548C1355 700 1330 880 1240 1035" w={8} />
      <Groove d="M797 1145C720 1220 600 1255 482 1243" w={10} />
      <Groove d="M970 1170C870 1265 720 1315 560 1302" w={9} />
      <Groove d="M1080 1162C1000 1240 880 1300 740 1312" w={9} />
      <Groove d="M165 985C220 1080 310 1165 415 1218" w={10} />
      <ellipse cx="490" cy="865" rx="325" ry="329" fill="#2b4405" stroke="#0d1502" strokeWidth="19" />
      <ellipse cx="490" cy="865" rx="325" ry="329" fill="none" stroke="#263f06" strokeWidth="13" />
    </g>
    <Facets
      fill="#07521a"
      list={[
        '840,96 902,82 895,120 830,182',
        '832,100 795,122 762,155 745,262 826,186',
        '748,168 680,255 662,362 735,268',
        '738,275 750,284 682,370 664,362',
        '662,280 575,425 556,540 566,520 650,380',
        '650,382 674,388 632,468 597,553 557,542 566,520',
        '556,455 523,533 545,538',
      ]}
    />
    <Facets
      fill="#095520"
      list={[
        '805,805 810,796 1000,712 1240,600 1310,556 1356,512 1252,542 1130,634 1010,698 818,790',
        '800,738 975,656 992,706 818,790',
        '997,650 1105,592 1120,642 1010,698',
        '1120,586 1200,545 1218,576 1130,632',
        '1212,534 1245,518 1252,542 1222,576',
      ]}
    />
    <Facets fill="#304a09" list={['975,656 997,650 1010,698 992,706', '1105,592 1120,586 1132,634 1120,642', '650,370 684,374 674,388 648,382', '780,738 800,736 820,790 808,794']} />
    <Facets
      fill="#12812f"
      list={[
        '750,1065 900,1110 958,1172 880,1165 810,1148',
        '915,1112 1040,1116 1075,1162 980,1172',
        '1052,1118 1160,1103 1165,1112 1130,1142 1085,1158',
        '1165,1100 1195,1078 1175,1108',
        '740,1095 716,1115 786,1142',
      ]}
    />
    <Facets
      fill="#0e6b28"
      list={[
        '268,320 240,350 253,362',
        '235,362 205,435 243,472 247,390',
        '200,455 203,572 262,624 275,602 262,540 245,488',
        '208,597 225,655 246,630',
        '137,955 150,928 176,920 182,955 202,980 145,978',
        '420,1190 465,1190 484,1235 474,1278 420,1225',
        '486,1240 522,1285 480,1282',
        '397,1175 415,1180 408,1208',
      ]}
    />
    <path d="M183 900C182 830 230 760 300 720C350 680 430 655 500 680C600 705 660 790 667 880C670 960 630 1040 560 1095C500 1142 420 1160 350 1145C250 1110 180 1020 183 900Z" fill="url(#casing)" stroke="#00001c" strokeWidth="4" />
    <ellipse cx="400" cy="924" rx="217" ry="224" fill="#00004e" stroke="#000018" strokeWidth="3" />
    <ellipse cx="406" cy="926" rx="188" ry="188" fill="#00007c" stroke="#000018" strokeWidth="3" />
    <ellipse cx="416" cy="915" rx="168" ry="175" fill="#000" />
    <g fill="#a80a10" stroke="#2a0000" strokeWidth="2">
      <polygon points="440,735 446,706 495,682 492,706 462,742" />
      <polygon points="583,880 640,855 658,864 592,900" />
      <polygon points="240,770 258,755 271,772 256,786" />
      <polygon points="527,1082 545,1070 558,1092 542,1104" />
      <polygon points="333,1110 355,1116 331,1133" />
      <polygon points="192,976 214,964 212,980" />
    </g>
    <Facets fill="#34520a" list={['498,680 518,684 492,706', '636,856 658,838 662,860', '190,960 210,956 214,966 196,972', '330,1134 350,1118 358,1145']} />
    <g fill="#a9a9a9" fontFamily='"Liberation Mono", monospace' fontWeight="700" fontSize="35">
      <text transform="translate(320 928) rotate(-46)">TARGET SET</text>
      <text transform="translate(378 982) rotate(-45)">31.000275</text>
      <text transform="translate(436 1040) rotate(-45)">-92.557992</text>
    </g>
  </Model>
);

/* -------------------------------------------------------------------- data */

type Cmd = { icon: string; lines: string[]; w: number; drop?: boolean; sep?: boolean; off?: boolean };
const commands: Cmd[] = [
  { icon: 'ghost', lines: ['Edit', 'Component'], w: 78, off: true },
  { icon: 'insert', lines: ['Insert Components'], w: 106, drop: true },
  { icon: 'clip', lines: ['Mate'], w: 42 },
  { icon: 'preview', lines: ['Component', 'Preview Window'], w: 92, off: true },
  { icon: 'pattern', lines: ['Linear Component Pattern'], w: 156, drop: true },
  { icon: 'smart', lines: ['Smart', 'Fasteners'], w: 56 },
  { icon: 'move', lines: ['Move Component'], w: 110, drop: true, sep: true },
  { icon: 'hidden', lines: ['Show Hidden', 'Components'], w: 82, sep: true },
  { icon: 'feature', lines: ['Assemb...'], w: 62, drop: true },
  { icon: 'reference', lines: ['Referenc...'], w: 62, drop: true, sep: true },
  { icon: 'motion', lines: ['New Motion', 'Study'], w: 78, sep: true },
  { icon: 'bom', lines: ['Bill of', 'Materials'], w: 60, sep: true },
  { icon: 'exploded', lines: ['Exploded View'], w: 89, drop: true, sep: true },
  { icon: 'instant', lines: ['Instant3D'], w: 64, sep: true },
  { icon: 'update', lines: ['Update', 'Speedpak'], w: 63, sep: true },
  { icon: 'camera', lines: ['Take', 'Snapshot'], w: 62 },
  { icon: 'assembly', lines: ['Large Assembly', 'Settings'], w: 88 },
];
const ribbonTabs: [string, number][] = [
  ['Assembly', 78], ['Layout', 54], ['Sketch', 55], ['Markup', 62], ['Evaluate', 64],
  ['SOLIDWORKS Add-Ins', 151], ['MBD', 49], ['SOLIDWORKS CAM', 137],
];
const tree: { icon: string; text: string; open?: boolean; mark?: React.ReactNode }[] = [
  { icon: 'folder', text: 'History', open: true, mark: <path d="M2 5a3 3 0 1 1 1 2.500M5 3v2h2M0 4l2 2 2-2" fill="none" stroke="#3f87a5" /> },
  { icon: 'folder', text: 'Sensors', mark: <><circle cx="5" cy="5" r="3.300" fill="#fff" stroke="#222" strokeWidth="1.300" /><path d="M5 5 8 7 5 8z" fill="#d22" /></> },
  { icon: 'folder', text: 'Annotations', open: true, mark: <path d="m1.500 9 3.500-8 3.500 8M3 6h4" fill="none" stroke="#2f7390" strokeWidth="1.500" /> },
  { icon: 'plane', text: 'Front Plane' },
  { icon: 'plane', text: 'Top Plane' },
  { icon: 'plane', text: 'Right Plane' },
  { icon: 'origin', text: 'Origin' },
  { icon: 'part', text: '(f) Grenade<1> (Default<<Defau', open: true },
  { icon: 'part', text: '(-) GPS Device<1> (Default<<De', open: true },
  { icon: 'mates', text: 'Mates', open: true },
];

const quick: (string | null)[] = ['home', 'page', null, 'open', null, 'save', null, 'print', null, 'undo', null];
const view: (string | null)[] = [
  'lens', 'lensArea', 'previous', 'section', 'dynamic', 'orient', null, 'style', null, 'eye', null,
  'ballPen', 'scene', null, 'monitor', null,
];

const Glyph = ({ s = 16, children }: { s?: number; children: React.ReactNode }) => (
  <svg width={s} height={s} viewBox="0 0 16 16" fill="none" stroke="#4c5250" aria-hidden="true">{children}</svg>
);

export default function App() {
  const [time, setTime] = React.useState(3.4);
  const position = `${(time / 21) * 100}%`;
  return (
    <Page>
      <Global />
      <TitleBar>
        <Icon n="cone" s={20} />
        <h1>Microsoft Game DVR - SOLIDWORKS Premium 2020 SP0.0 - [GPS Grenade] - VLC media player</h1>
        <WindowButtons>
          <WindowButton aria-label="Minimize"><svg width="16" height="16" stroke="#111"><path d="M0 8.500h16" /></svg></WindowButton>
          <WindowButton aria-label="Restore"><svg width="16" height="16" fill="none" stroke="#111"><path d="M.5 4.500h11v11H.5zM3.500 4.500v-3h12v11h-4" /></svg></WindowButton>
          <WindowButton aria-label="Close"><svg width="16" height="16" stroke="#111" strokeWidth="1.300"><path d="m0 0 16 16M16 0 0 16" /></svg></WindowButton>
        </WindowButtons>
      </TitleBar>
      <MenuBar>
        {['Media', 'Playback', 'Audio', 'Video', 'Tools', 'View', 'Help'].map(m => <button key={m}>{m}</button>)}
      </MenuBar>

      <Video>
        <Cad>
          <QuickBar>
            <Logo>
              <svg width="24" height="25" viewBox="0 0 24 25" fill="none" stroke="#c8202f" strokeWidth="2">
                <path d="M8 2c5-2 8 0 4 4L9 9" />
                <path d="M6 12c6-2 8 1 5 5-3 4-6 6-10 6L5 14" />
                <path d="M23 12c-6-2-9 1-6 4s4 6-4 7" strokeWidth="2.600" />
              </svg>
              <span><b>SOLID</b>WORKS</span>
            </Logo>
            <Expand aria-label="Expand menu"><svg width="6" height="11"><path d="M0 0l6 5.500L0 11z" fill="#333" /></svg></Expand>
            {quick.map((q, i) => (q ? <Tool key={i} aria-label={q}><Icon n={q} s={17} /></Tool> : <Drop key={i} aria-label="More"><Down /></Drop>))}
            <Tool $on aria-label="Select"><Icon n="cursor" s={17} /></Tool>
            <Drop $framed aria-label="More"><Down /></Drop>
            <Tool aria-label="Rebuild"><Icon n="traffic" /></Tool>
            <Tool aria-label="File properties"><Icon n="list" s={15} /></Tool>
            <Tool aria-label="Options"><Icon n="gear" /></Tool>
            <Drop aria-label="More"><Down /></Drop>
            <DocTitle>GPS Grenade</DocTitle>
            <CommandSearch onSubmit={e => e.preventDefault()}>
              <Icon n="prompt" s={15} />
              <input aria-label="Search Commands" placeholder="Search Commands" />
              <Icon n="glass" s={19} />
              <Down />
            </CommandSearch>
            <QuickEnd>
              <Tool aria-label="Account"><Icon n="user" /></Tool>
              <Tool aria-label="Help"><b>?</b></Tool>
              <Drop aria-label="More"><Down /></Drop>
              <Tool aria-label="Minimize"><Icon n="min" s={14} /></Tool>
              <Tool aria-label="Restore"><Icon n="restore" s={14} /></Tool>
              <Tool aria-label="Close"><Icon n="close" s={13} /></Tool>
            </QuickEnd>
          </QuickBar>

          <Ribbon>
            {commands.map(c => (
              <Command key={c.lines[0] + c.w} $w={c.w} $drop={c.drop} $sep={c.sep} $off={c.off} disabled={c.off}>
                <Icon n={c.icon} />
                {c.lines.map(l => <span key={l}>{l}</span>)}
                {c.drop && <Down />}
              </Command>
            ))}
          </Ribbon>

          <Body>
            <TabRow>
              {ribbonTabs.map(([t, w], i) => <RibbonTab key={t} $w={w} $on={i === 0}>{t}</RibbonTab>)}
              <ViewTools>
                {view.map((v, i) => (v ? <Tool key={i} aria-label={v}><Icon n={v} s={17} /></Tool> : <Drop key={i} aria-label="More"><Down c="#777" /></Drop>))}
              </ViewTools>
              <DocButtons>
                {['paneL', 'paneR', 'min', 'restore', 'close'].map(v => <Tool key={v} aria-label={v}><Icon n={v} s={13} /></Tool>)}
              </DocButtons>
            </TabRow>
            <Work>
              <Panel>
                <Grip><i /></Grip>
                <PanelTabs>
                  <PanelTab $on $w={36} aria-label="Feature tree"><Icon n="assembly" /></PanelTab>
                  <PanelTab aria-label="Properties"><Icon n="props" /></PanelTab>
                  <PanelTab aria-label="Configurations"><Icon n="tree" /></PanelTab>
                  <PanelTab aria-label="Dimensions"><Icon n="target" /></PanelTab>
                  <PanelTab aria-label="Display"><Icon n="display" /></PanelTab>
                  <PanelTab $w={22} aria-label="CAM"><Icon n="cam" s={14} /></PanelTab>
                  <PanelTab $on $w={20} aria-label="Previous tabs"><svg width="5" height="8"><path d="M5 0v8L0 4z" /></svg></PanelTab>
                  <PanelTab $on $w={18} aria-label="Next tabs"><svg width="6" height="10" fill="none" stroke="#555" strokeWidth="1.500"><path d="m0 0 5 5-5 5" /></svg></PanelTab>
                </PanelTabs>
                <Filter>
                  <Icon n="filter" />
                  <Down />
                  <input aria-label="Filter tree" />
                </Filter>
                <Tree>
                  <Row $root><Icon n="assembly" />GPS Grenade (Default&lt;Display State</Row>
                  {tree.map(r => (
                    <Row key={r.text}>
                      <Twist>{r.open && <svg width="5" height="7"><path d="M0 0l4 3.500L0 7z" fill="#555" /></svg>}</Twist>
                      {r.mark ? (
                        <FolderMark>
                          <Icon n={r.icon} />
                          <svg width="10" height="10" viewBox="0 0 10 10">{r.mark}</svg>
                        </FolderMark>
                      ) : <Icon n={r.icon} />}
                      {r.text}
                    </Row>
                  ))}
                </Tree>
                <HScroll>
                  <svg width="6" height="9" fill="none" stroke="#444" strokeWidth="1.700"><path d="m5 0-4 4.500L5 9" /></svg>
                  <Thumb />
                  <svg width="6" height="9" fill="none" stroke="#444" strokeWidth="1.700"><path d="m1 0 4 4.500L1 9" /></svg>
                </HScroll>
              </Panel>
              <Canvas>
                <Splitter aria-label="Collapse panel"><i /></Splitter>
                <Grenade />
                <Triad width="64" height="44" viewBox="0 0 64 44" aria-label="Axes">
                  <circle cx="39" cy="33" r="5" fill="#2c8a2c" />
                  <path d="M32 37 16 22" stroke="#2018b0" strokeWidth="3.500" />
                  <path d="m8 13 11 5-7 8z" fill="#160e9a" />
                  <path d="M32 37 45 23" stroke="#b80f22" strokeWidth="4" />
                  <path d="m54 13-4 11-8-6z" fill="#c8142a" />
                  <text x="2" y="12" fontSize="12" fontFamily="Liberation Sans, sans-serif" fill="#3a34c4">Z</text>
                  <text x="52" y="12" fontSize="12" fontFamily="Liberation Sans, sans-serif" fill="#d93a4c">X</text>
                </Triad>
                <TaskPane>
                  {['home', 'books', 'folderOpen', 'palette', 'ball', 'props', 'chat'].map(p => (
                    <PaneButton key={p} $on={p === 'ball'} aria-label={p}><Icon n={p} /></PaneButton>
                  ))}
                </TaskPane>
              </Canvas>
            </Work>
          </Body>

          <SheetTabs>
            {['M2 0v8M8 0 4 4l4 4z', 'M6 0 2 4l4 4z', 'M2 0l4 4-4 4z', 'M6 0v8M0 0l4 4-4 4z'].map(d => (
              <SheetNav key={d} aria-label="Scroll tabs"><svg width="8" height="8" fill="#7f7e9c" stroke="#7f7e9c"><path d={d} /></svg></SheetNav>
            ))}
            <SheetTab $w={66} $on>Model</SheetTab>
            <SheetTab $w={78}>3D Views</SheetTab>
            <SheetTab $w={126}>Motion Study 1</SheetTab>
          </SheetTabs>
          <Status>
            <span>SOLIDWORKS Premium 2020 SP0.0</span>
            <StatusCell $w={101}>Under Defined</StatusCell>
            <StatusCell $w={124}>Editing Assembly</StatusCell>
            <StatusCell $w={84}><Icon n="warn" s={14} /></StatusCell>
            <StatusCell $w={62}>MMGS</StatusCell>
            <StatusCell $w={28}><svg width="5" height="3"><path d="M0 3h5L2.500 0z" fill="#333" /></svg></StatusCell>
            <Icon n="tag" s={14} />
          </Status>
        </Cad>
      </Video>

      <Controls>
        <Seek>
          <span>00:03</span>
          <SeekBar
            type="range" min={0} max={21} step={0.1} value={time} aria-label="Position"
            onChange={e => setTime(Number(e.target.value))}
            style={{ '--pos': position } as React.CSSProperties}
          />
          <span>00:21</span>
        </Seek>
        <Buttons>
          <Push $big aria-label="Play"><svg width="15" height="19"><path d="M.5.5 14.500 9.500.5 18.500z" fill="#7c807e" stroke="#4c5250" /></svg></Push>
          <Push $gap aria-label="Previous"><Glyph><path d="M1 4v8M8 4 3.500 8 8 12zM15 4l-4.500 4 4.500 4z" fill="#8a8e8c" strokeWidth="1.300" /></Glyph></Push>
          <Push aria-label="Stop"><Glyph><path d="M2.500 2.500h11v11h-11z" fill="#7c807e" /></Glyph></Push>
          <Push aria-label="Next"><Glyph><path d="M15 4v8M1 4l4.500 4L1 12zM8 4l4.500 4L8 12z" fill="#8a8e8c" strokeWidth="1.300" /></Glyph></Push>
          <Push $gap aria-label="Fullscreen"><Glyph><path d="M.5 1.500h15v13H.5z" fill="#444a48" /><path d="M1 8.500h7V14H1z" fill="#e8e8e8" stroke="none" /><path d="m9 8 4-4M10 3.500h3.500V7" stroke="#fff" strokeWidth="1.300" /></Glyph></Push>
          <Push aria-label="Extended settings"><Glyph><path d="M3 1v14M8 1v14M13 1v14" strokeWidth="1.800" /><path d="M1 4h4M6 11.500h4M11 5h4" strokeWidth="2.800" /></Glyph></Push>
          <Push $gap aria-label="Playlist"><Glyph><path d="M1 3h2M1 6.400h2M1 9.800h2M1 13.200h2" strokeWidth="1.800" /><path d="M5 3h10M5 6.400h10M5 9.800h10M5 13.200h10" stroke="#8c908e" strokeWidth="1.700" /></Glyph></Push>
          <Push aria-label="Loop"><Glyph><path d="M2 9V6.500C2 5 3 4.500 4.500 4.500H11M14 7v2.500c0 1.500-1 2-2.500 2H5" strokeWidth="2.200" /><path d="m10 1.500 4 3-4 3zM6 8.500l-4 3 4 3z" fill="#4c5250" strokeWidth=".5" /></Glyph></Push>
          <Push $on aria-label="Shuffle"><Glyph><path d="M0 4h3c4 0 5 8 9 8h1M0 12h3c4 0 5-8 9-8h1" strokeWidth="2.600" /><path d="m12 1 4 3-4 3zM12 9l4 3-4 3z" fill="#4c5250" strokeWidth=".5" /></Glyph></Push>
          <Volume>
            <svg width="17" height="16" fill="none" stroke="#777"><path d="M1 5h3l4-4v13l-4-4H1z" /><path d="M10 5q1.500 2.500 0 5M12 3.500q2.500 4 0 8M14 2q4 5.500 0 11" stroke="#4a7dbd" strokeWidth="1.300" /></svg>
            <svg width="80" height="24" viewBox="0 0 80 24">
              <defs>
                <linearGradient id="vol"><stop offset="0" stopColor="#9fd89a" /><stop offset=".44" stopColor="#1fd01f" /><stop offset=".56" stopColor="#f5c51a" /><stop offset=".8" stopColor="#f77b1d" /><stop offset="1" stopColor="#f2351c" /></linearGradient>
              </defs>
              <path d="M1 23v-2L79 1v22z" fill="url(#vol)" stroke="#666" />
            </svg>
            <span>200%</span>
            <input type="range" min={0} max={200} defaultValue={200} aria-label="Volume" />
          </Volume>
        </Buttons>
      </Controls>

      <Taskbar>
        <Start aria-label="Start"><svg width="25" height="24" viewBox="0 0 25 24" fill="#fff"><path d="M0 3.200 10.500 1.800v9.500H0zM11.500 1.600 25 0v11.300H11.500zM0 12.300h10.500v9.600L0 20.600zM11.500 12.300H25V24l-13.500-1.700z" /></svg></Start>
        <TaskSearch>
          <svg width="25" height="25" fill="none" stroke="#eee" strokeWidth="2"><circle cx="16" cy="9" r="7.800" /><path d="M10.500 14.500 1 24" /></svg>
          <input placeholder="Type here to search" aria-label="Type here to search" />
        </TaskSearch>
        <Start aria-label="Cortana"><svg width="26" height="26"><circle cx="13" cy="13" r="10.500" fill="none" stroke="#fff" strokeWidth="3" /></svg></Start>
        <TaskApp aria-label="Task View"><svg width="25" height="24" fill="none" stroke="#fff" strokeWidth="1.300"><path d="M1 0v3.500h15V0M1 24v-3.500h15V24M1 6.500h15v11H1zM23 0v6M23 11.500V24" /><path d="M21 7h4v3.500h-4z" fill="#fff" stroke="none" /></svg></TaskApp>
        <TaskApp aria-label="Edge">
          <svg width="30" height="32" viewBox="0 0 30 32"><path d="M0 15C1 6 7 0 15.500 0 24 0 30 6 30 14.500V18H10.500c.3 5 4 7 8.500 7 3.500 0 6-.8 8-2v7c-2.500 1.300-5.500 2-9 2C9 32 3.500 27 3.500 19.500 3.500 14 6.500 10 11 8 6.500 8.500 2.500 11 0 15zM11 13h10c0-3.500-1.700-5.500-4.800-5.500S11.300 9.700 11 13z" fill="#0a7bd8" /></svg>
        </TaskApp>
        <TaskApp $open aria-label="File Explorer">
          <svg width="32" height="27" viewBox="0 0 32 27"><path d="M0 0h13l2 3H0z" fill="#dd9a05" /><path d="M0 3.500h14L16 2h16v23H0z" fill="#fdd568" /><path d="M5 26V15q0-1.500 1.500-1.500h19Q27 13.500 27 15v11h-5.500v-6.500h-11V26z" fill="#3f97de" /></svg>
        </TaskApp>
        <TaskApp aria-label="Store">
          <svg width="36" height="34" viewBox="0 0 36 34"><path d="M12 10V5q0-4 6-4t6 4v5M15 10V5q0-3 5-3" fill="none" stroke="#ddd" strokeWidth="1.500" /><path d="M0 9h36v23q0 2-2 2H2q-2 0-2-2z" fill="#fff" /><path d="M11 14h6.500v6.500H11z" fill="#f25022" /><path d="M18.500 14H25v6.500h-6.500z" fill="#7fba00" /><path d="M11 21.500h6.500V28H11z" fill="#00a4ef" /><path d="M18.500 21.500H25V28h-6.500z" fill="#ffb900" /></svg>
        </TaskApp>
        <TaskApp aria-label="Firefox">
          <svg width="34" height="35" viewBox="0 0 34 35">
            <defs><linearGradient id="fox" x1=".8" y1="0" x2=".3" y2="1"><stop offset="0" stopColor="#fff44f" /><stop offset=".4" stopColor="#ff980e" /><stop offset=".75" stopColor="#ff3647" /><stop offset="1" stopColor="#e31587" /></linearGradient></defs>
            <path d="M22 0c2 4 10 7 12 17 1 10-7 18-17 18S0 28 0 19c0-6 2-9 4-12l1 4 3-6 3 4c3-1 6-1 8 0-1-4 0-7 3-9z" fill="url(#fox)" />
            <circle cx="17" cy="18.500" r="7" fill="#6a3fd6" /><path d="M5 12c4-1 8-1 11 2l4 1-5 3c-3 1-5 0-6 3-3-2-4-5-4-9z" fill="#ffa91f" />
          </svg>
        </TaskApp>
        <TaskApp $open aria-label="Chrome">
          <svg width="34" height="34" viewBox="0 0 34 34"><circle cx="17" cy="17" r="16.500" fill="#fcca3f" /><path d="M2.700 8.700a16.500 16.500 0 0 1 28.600 0L31.300 10H17l-8 11z" fill="#db4a3c" /><path d="M2.700 8.700A16.500 16.500 0 0 0 17 33.500L24 21l-13.500.5z" fill="#1aa260" /><path d="M17 33.500 24 21l-7 4z" fill="#fcca3f" /><circle cx="17" cy="17" r="8" fill="#fff" /><circle cx="17" cy="17" r="6.300" fill="#4c8bf5" /></svg>
        </TaskApp>
        <TaskApp $active aria-label="VLC media player"><Icon n="cone" s={34} /></TaskApp>
        <Tray>
          <TrayItem aria-label="Hidden icons"><svg width="18" height="10" fill="none" stroke="#fff" strokeWidth="1.500"><path d="m1 9 8-8 8 8" /></svg></TrayItem>
          <TrayItem aria-label="Battery"><svg width="25" height="18" fill="none" stroke="#fff" strokeWidth="1.400"><path d="M7 4.500h15.500V16H4v-4M24 8v4M1 3h6v4q-3 4-6 0zM2.500 0v3M5.500 0v3M4 9v4" /><path d="M6 8h7v6.500H6z" fill="#fff" stroke="none" /></svg></TrayItem>
          <TrayItem aria-label="Network"><svg width="20" height="20" fill="none" stroke="#ddd" strokeWidth="1.400"><path d="M1 19C1 9 8 1 18 1M5.500 19C5.500 11 11 6 18 6M10 19c0-5 3-8.500 8-8.500" /><path d="M14 19q0-3.500 4-4" /><circle cx="17.500" cy="17.500" r="1.500" fill="#fff" stroke="none" /></svg></TrayItem>
          <TrayItem aria-label="Speakers"><svg width="23" height="19" fill="none" stroke="#fff" strokeWidth="1.400"><path d="M1 6h3.500L9 1v17l-4.500-5H1zM12 7q1.500 2.500 0 5M15 4.500q3.500 5 0 10" /><path d="M18.500 2q5 7.500 0 15" stroke="#888" /></svg></TrayItem>
          <TrayItem $w={58}>ENG</TrayItem>
          <Clock>00:32<br />02-05-2021</Clock>
          <TrayItem $w={66} aria-label="Notifications"><svg width="25" height="25" fill="none" stroke="#fff" strokeWidth="1.600"><path d="M1 1h23v18h-8l-4 4-4-4H1z" /></svg></TrayItem>
          <ShowDesktop aria-label="Show desktop" />
        </Tray>
      </Taskbar>
      <Watermark>
        <p>Activate Windows</p>
        <p>Go to Settings to activate Windows.</p>
      </Watermark>
    </Page>
  );
}
